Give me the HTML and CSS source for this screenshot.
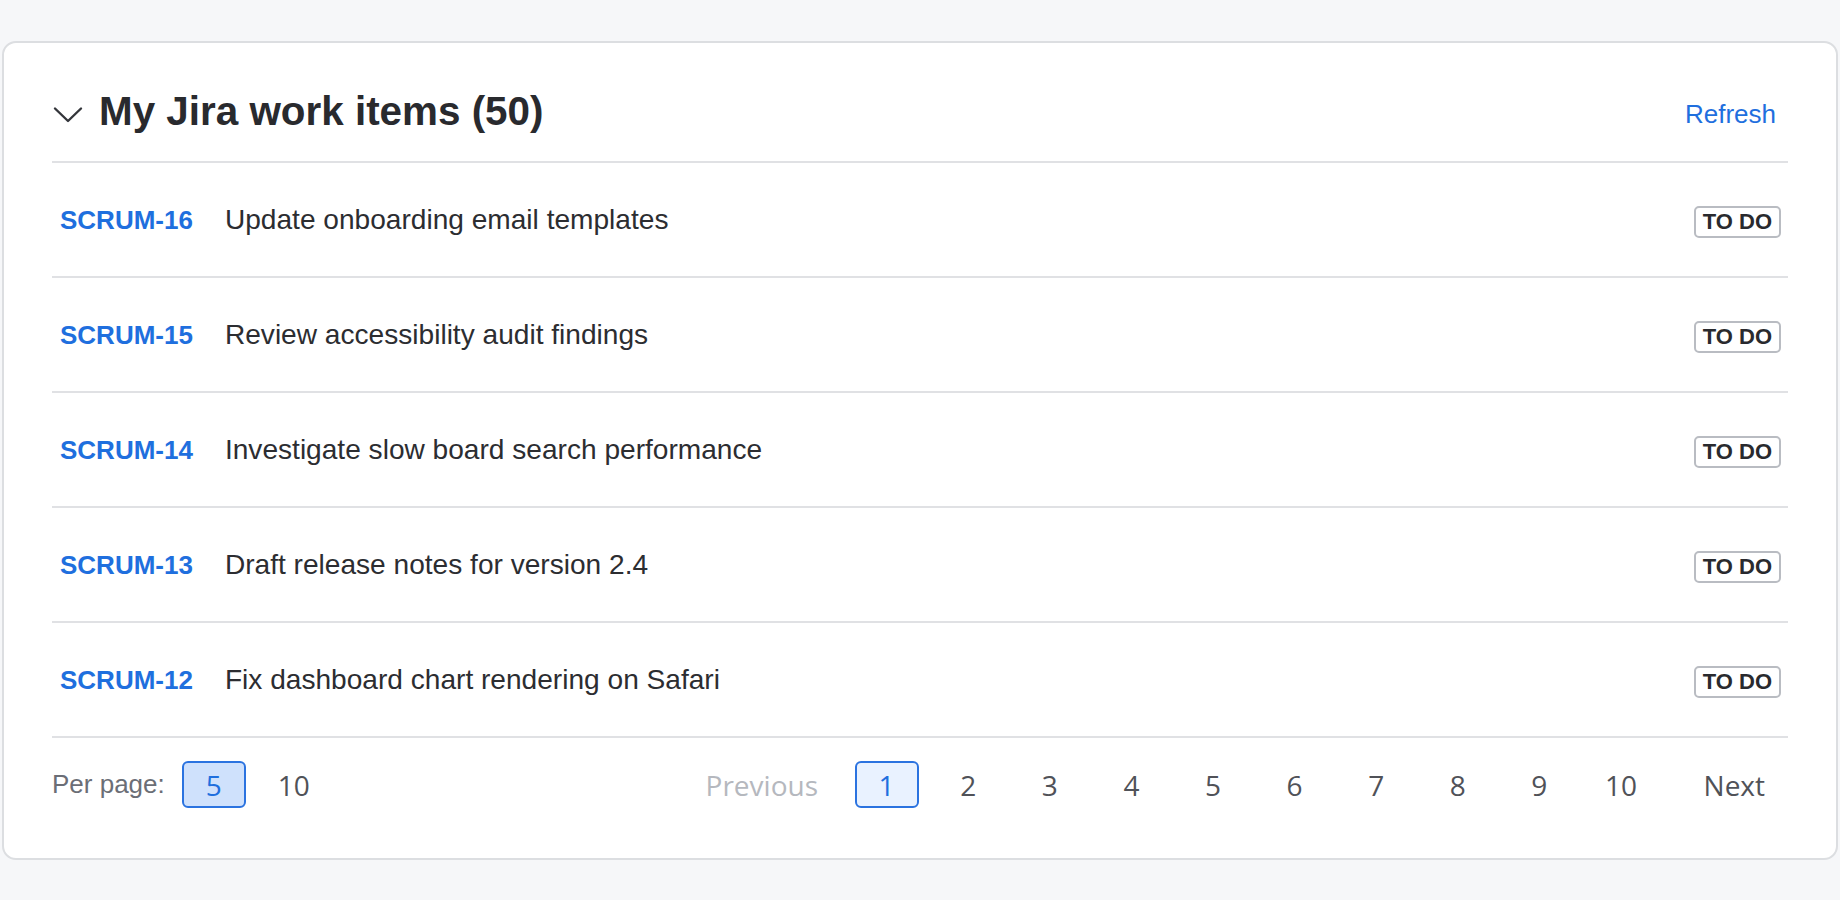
FILE: index.html
```html
<!DOCTYPE html>
<html lang="en">
<head>
<meta charset="utf-8">
<title>My Jira work items</title>
<link rel="stylesheet" href="styles.css">
</head>
<body>
<main class="page">
  <section class="card">
    <header class="card-header">
      <div class="title-group">
        <svg class="chevron" width="32" height="32" viewBox="0 0 32 32" aria-hidden="true">
          <path d="M3 13.5 L16 26 L29 13.5" fill="none" stroke="#34363b" stroke-width="2.4" stroke-linecap="round" stroke-linejoin="round"/>
        </svg>
        <h1 class="title">My Jira work items (50)</h1>
      </div>
      <a class="refresh" href="#">Refresh</a>
    </header>
    <ul class="items">
      <li class="item"><a class="key" href="#">SCRUM-16</a><span class="summary">Update onboarding email templates</span><span class="status">TO DO</span></li>
      <li class="item"><a class="key" href="#">SCRUM-15</a><span class="summary">Review accessibility audit findings</span><span class="status">TO DO</span></li>
      <li class="item"><a class="key" href="#">SCRUM-14</a><span class="summary">Investigate slow board search performance</span><span class="status">TO DO</span></li>
      <li class="item"><a class="key" href="#">SCRUM-13</a><span class="summary">Draft release notes for version 2.4</span><span class="status">TO DO</span></li>
      <li class="item"><a class="key" href="#">SCRUM-12</a><span class="summary">Fix dashboard chart rendering on Safari</span><span class="status">TO DO</span></li>
    </ul>
    <footer class="card-footer">
      <div class="per-page">
        <span class="per-page-label">Per page:</span>
        <button class="pg-btn pg-selected">5</button>
        <button class="pg-btn">10</button>
      </div>
      <nav class="pagination">
        <button class="pg-btn pg-text pg-prev" disabled>Previous</button>
        <button class="pg-btn pg-current">1</button>
        <button class="pg-btn">2</button>
        <button class="pg-btn">3</button>
        <button class="pg-btn">4</button>
        <button class="pg-btn">5</button>
        <button class="pg-btn">6</button>
        <button class="pg-btn">7</button>
        <button class="pg-btn">8</button>
        <button class="pg-btn">9</button>
        <button class="pg-btn">10</button>
        <button class="pg-btn pg-text pg-next">Next</button>
      </nav>
    </footer>
  </section>
</main>
</body>
</html>
```

FILE: styles.css
```css
* {
  box-sizing: border-box;
}

html, body {
  margin: 0;
  padding: 0;
  background: #f6f7f9;
  font-family: "Liberation Sans", Arial, sans-serif;
}

.page {
  padding: 41px 2px 0 2px;
  height: 900px;
}

.card {
  background: #ffffff;
  border: 2px solid #dcdee1;
  border-radius: 14px;
  padding: 44px 48px 50px 48px;
}

.card-header {
  display: flex;
  align-items: center;
  justify-content: space-between;
  padding-bottom: 26px;
  border-bottom: 2px solid #e0e1e4;
}

.title-group {
  display: flex;
  align-items: center;
  gap: 15px;
}

.chevron {
  display: block;
  flex: none;
}

.title {
  margin: 0;
  font-size: 40.4px;
  line-height: 48px;
  font-weight: 700;
  color: #292a2e;
}

.refresh {
  font-size: 26px;
  line-height: 32px;
  color: #1f6fde;
  text-decoration: none;
  margin-right: 12px;
  margin-top: 6px;
}

.items {
  list-style: none;
  margin: 0;
  padding: 0;
}

.item {
  display: flex;
  align-items: center;
  height: 115px;
  padding: 0 8px;
  border-bottom: 2px solid #e0e1e4;
}

.key {
  font-size: 26px;
  font-weight: 700;
  color: #1f6fde;
  text-decoration: none;
  margin-right: 32px;
  margin-top: 2px;
}

.summary {
  font-size: 28.1px;
  color: #2c2d31;
}

.status {
  margin-left: auto;
  border: 2px solid #b9bcc2;
  border-radius: 5px;
  padding: 0 7px;
  height: 32px;
  line-height: 28px;
  font-size: 22px;
  font-weight: 700;
  color: #292a2e;
  margin-top: 4px;
  margin-right: -1px;
}

.card-footer {
  display: flex;
  align-items: center;
  justify-content: space-between;
  padding-top: 23px;
}

.per-page {
  display: flex;
  align-items: center;
  gap: 16px;
}

.per-page-label {
  font-size: 26px;
  color: #6b6e76;
  margin-right: 1px;
}

.pagination {
  display: flex;
  align-items: center;
  gap: 17.6px;
  margin-right: -6px;
}

.pg-btn {
  display: flex;
  align-items: center;
  justify-content: center;
  height: 47px;
  min-width: 64px;
  padding: 0;
  margin: 0;
  border: 2px solid transparent;
  border-radius: 6px;
  background: transparent;
  font-family: "Open Sans", "Noto Sans", sans-serif;
  font-size: 28px;
  color: #505258;
  cursor: pointer;
}

.pg-selected {
  background: #cfe1fc;
  border-color: #2b73e0;
  color: #1f6fde;
}

.pg-current {
  background: #e9f2ff;
  border-color: #2b73e0;
  color: #1f6fde;
}

.pg-prev {
  color: #b5b8be;
  cursor: default;
  padding: 0 17px 0 22px;
}

.pg-next {
  padding: 0 27px 0 31px;
}
```
